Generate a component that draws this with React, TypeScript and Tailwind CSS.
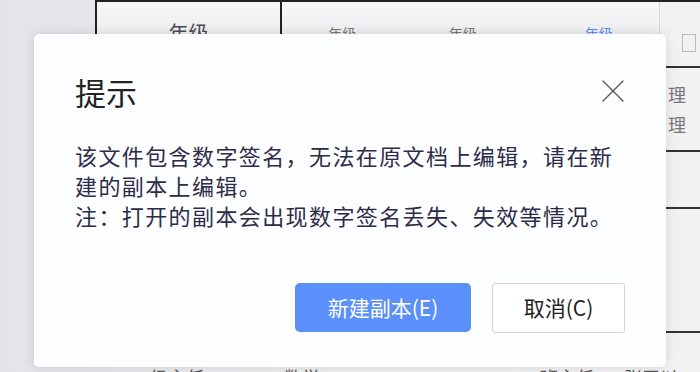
import { X } from "lucide-react";

const cjk = { fontFamily: '"Noto Sans CJK SC", "Noto Sans", sans-serif' };

function BackgroundDoc() {
  return (
    <div className="absolute inset-0 bg-gradient-to-r from-[#e4e4e8] via-[#efeff2] to-[#f2f2f4]">
      {/* table header visible above the dialog */}
      <div className="ml-[95px] flex h-[50px] border-t-2 border-[#222]">
        <div className="flex w-[185px] items-end justify-center border-l-2 border-[#222] bg-gradient-to-b from-[#f8f8f9] to-[#e9e9ec] text-[20px] text-[#4a4a55]">
          <span className="translate-y-[-2px]">年级</span>
        </div>
        <div className="flex w-[380px] items-end justify-around border-l-2 border-r border-[#222] border-r-[#d8d8dc] bg-gradient-to-b from-[#f8f8f9] to-[#e9e9ec] pb-[6px] text-[14px] text-[#777]">
          <span>年级</span>
          <span>年级</span>
          <span className="text-[#5b8ff9]">— 年级</span>
        </div>
        <div className="ml-[22px] mt-[32px] h-[18px] w-[14px] border border-[#bbb]" />
      </div>
      {/* right column fragments */}
      <div className="absolute left-[666px] top-[66px] w-[34px]">
        <div className="h-[2px] bg-[#333]" />
        <div className="flex h-[82px] flex-col justify-center gap-[6px] pl-[2px] text-[18px] leading-[24px] text-[#777]">
          <span>理</span>
          <span>理</span>
        </div>
        <div className="h-[2px] bg-[#333]" />
        <div className="h-[55px]" />
        <div className="h-[2px] bg-[#333]" />
        <div className="h-[122px]" />
        <div className="h-[2px] bg-[#333]" />
      </div>
      <div className="absolute left-[150px] top-[364px] flex gap-[80px] text-[18px] text-[#555]">
        <span>级主任</span>
        <span>数学</span>
      </div>
      <div className="absolute left-[540px] top-[364px] flex gap-[30px] text-[18px] text-[#555]">
        <span>班主任</span>
        <span>张平以</span>
      </div>
    </div>
  );
}

export default function App() {
  return (
    <div className="relative h-[372px] w-[700px] overflow-hidden" style={cjk}>
      <BackgroundDoc />
      <div className="absolute left-[34px] top-[34px] flex h-[333px] w-[632px] flex-col rounded-[5px] bg-[#fdfeff] px-[41px] pb-[34px] pt-[38px] shadow-[0_0_12px_rgba(0,0,0,0.12)]">
        <div className="flex items-start justify-between">
          <h2 className="text-[31px] leading-[40px] text-[#222]">提示</h2>
          <button className="mr-[-8px] mt-[-1px] text-[#555]">
            <X size={40} strokeWidth={0.75} />
          </button>
        </div>
        <div className="mt-[28px] text-[22px] leading-[30px] tracking-[1.4px] text-[#2d2c48]">
          <p className="whitespace-nowrap">该文件包含数字签名，无法在原文档上编辑，请在新</p>
          <p className="whitespace-nowrap">建的副本上编辑。</p>
          <p className="whitespace-nowrap">注：打开的副本会出现数字签名丢失、失效等情况。</p>
        </div>
        <div className="mt-auto flex justify-end gap-[21px]">
          <button className="h-[49px] w-[176px] rounded-[5px] bg-[#5b8ff9] text-[21px] text-white">
            新建副本(E)
          </button>
          <button className="h-[50px] w-[133px] rounded-[3px] border border-[#d4d4d8] bg-white text-[21px] text-[#222]">
            取消(C)
          </button>
        </div>
      </div>
    </div>
  );
}
